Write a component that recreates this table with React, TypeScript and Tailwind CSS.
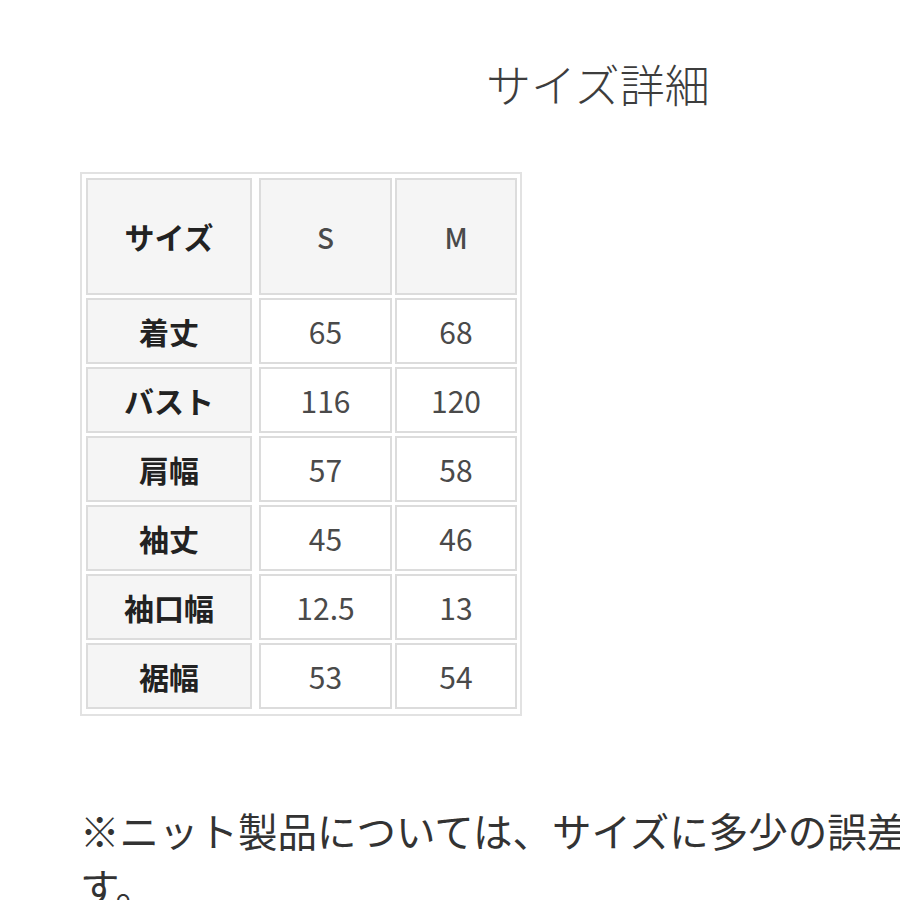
const rows = [
  { label: '着丈', s: '65', m: '68' },
  { label: 'バスト', s: '116', m: '120' },
  { label: '肩幅', s: '57', m: '58' },
  { label: '袖丈', s: '45', m: '46' },
  { label: '袖口幅', s: '12.5', m: '13' },
  { label: '裾幅', s: '53', m: '54' },
];

const font = { fontFamily: '"Noto Sans CJK JP", "Noto Sans", sans-serif' };

export default function App() {
  return (
    <div
      className="w-[900px] h-[900px] overflow-hidden bg-white text-[#333]"
      style={font}
    >
      {/* Title */}
      <div className="pt-[56px] pl-[486px]">
        <h1 className="text-[45px] leading-[56px] font-light text-[#3d3d3d] whitespace-nowrap">
          サイズ詳細
        </h1>
      </div>

      {/* Size table */}
      <div className="mt-[60px] ml-[80px] w-[442px] border-2 border-[#e2e2e2] pt-[4px] pb-[5px] pl-[4px] flex flex-col gap-[3px]">
        <div className="flex gap-[3px]">
          <div className="w-[166px] h-[117px] mr-[4px] border-2 border-[#dcdcdc] bg-[#f5f5f5] flex items-center justify-center text-[30px] font-bold text-[#222]">
            サイズ
          </div>
          <div className="w-[133px] h-[117px] border-2 border-[#dcdcdc] bg-[#f5f5f5] flex items-center justify-center text-[28px] font-medium text-[#4a4a4a]">
            S
          </div>
          <div className="w-[122px] h-[117px] border-2 border-[#dcdcdc] bg-[#f5f5f5] flex items-center justify-center text-[28px] font-medium text-[#4a4a4a]">
            M
          </div>
        </div>
        {rows.map((r) => (
          <div key={r.label} className="flex gap-[3px]">
            <div className="w-[166px] h-[66px] mr-[4px] border-2 border-[#dcdcdc] bg-[#f5f5f5] flex items-center justify-center text-[30px] font-bold text-[#222]">
              {r.label}
            </div>
            <div className="w-[133px] h-[66px] border-2 border-[#dcdcdc] bg-white flex items-center justify-center text-[30px] text-[#4a4a4a]">
              {r.s}
            </div>
            <div className="w-[122px] h-[66px] border-2 border-[#dcdcdc] bg-white flex items-center justify-center text-[30px] text-[#4a4a4a]">
              {r.m}
            </div>
          </div>
        ))}
      </div>

      {/* Note */}
      <p className="mt-[86px] ml-[80px] text-[39.5px] leading-[56px] text-[#333] whitespace-nowrap">
        ※ニット製品については、サイズに多少の誤差がありま
        <br />
        す。
      </p>
    </div>
  );
}
